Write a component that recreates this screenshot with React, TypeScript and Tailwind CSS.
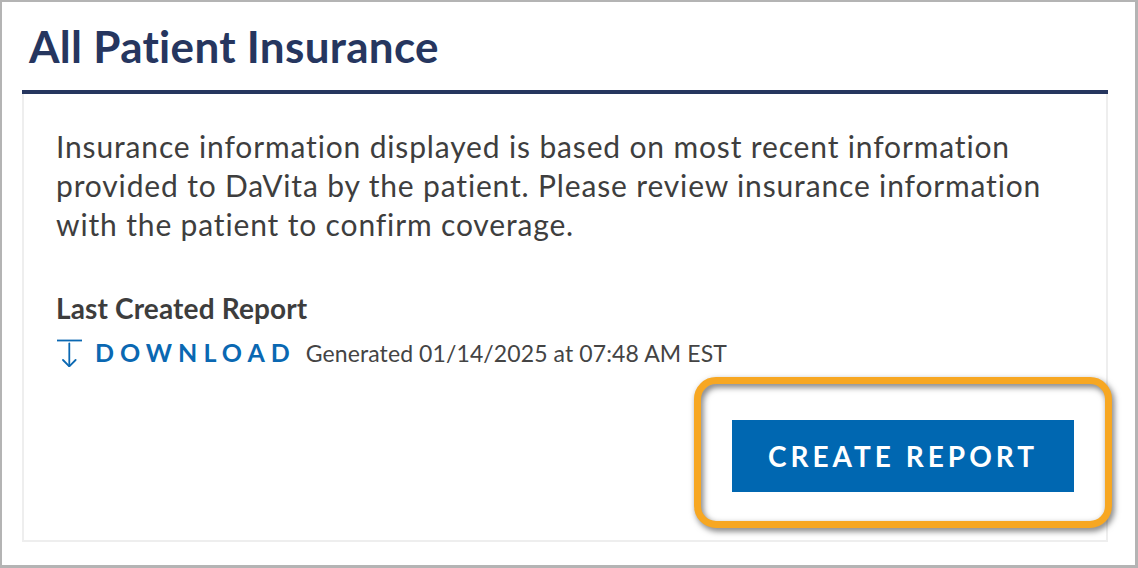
import React from "react";

function DownloadIcon() {
  return (
    <svg width="26" height="28" viewBox="0 0 26 28" fill="none" stroke="#0a68b2" strokeWidth="1.8" strokeLinecap="round" strokeLinejoin="round">
      <line x1="1" y1="1.5" x2="26" y2="1.5" strokeLinecap="butt" />
      <line x1="13.3" y1="4.5" x2="13.3" y2="27" />
      <polyline points="7,21 13.3,27.3 19.6,21" />
    </svg>
  );
}

export default function App() {
  return (
    <div className="w-[1138px] h-[568px] bg-white border-t-2 border-l-2 border-r-[3px] border-b-[3px] border-[#b4b4b4] font-['Lato','Liberation_Sans',sans-serif] overflow-hidden">
      <div className="pl-[20px] pr-[27px] pt-[19px]">
        <h1 className="text-[44px] font-bold leading-[50px] tracking-[0.3px] pl-[7px] text-[#26365f] mb-[19px]">
          All Patient Insurance
        </h1>
        <div className="h-[4px] bg-[#26365f]" />
        <div className="border-2 border-t-0 border-[#eeeeee] px-[32px] pt-[33px] pb-[48px]">
          <p className="text-[30px] leading-[39px] tracking-[0.85px] text-[#3e3e3e]">
            Insurance information displayed is based on most recent information provided to DaVita by the patient. Please review insurance information with the patient to confirm coverage.
          </p>
          <div className="mt-[47px] text-[28px] leading-[34px] font-bold tracking-[0.15px] text-[#3d3d3d]">
            Last Created Report
          </div>
          <div className="mt-[12px] flex items-center">
            <DownloadIcon />
            <div className="flex items-baseline ml-[13px]">
              <span className="text-[25px] leading-[30px] font-bold tracking-[6px] text-[#0a68b2]">
                DOWNLOAD
              </span>
              <span className="ml-[10px] text-[23px] leading-[30px] tracking-[0.1px] text-[#444444]">
                Generated 01/14/2025 at 07:48 AM EST
              </span>
            </div>
          </div>
          <div className="mt-[52px] flex justify-end">
            <div className="relative">
              <button className="w-[342px] h-[72px] bg-[#0067b1] text-white text-[28px] font-bold tracking-[4px] flex items-center justify-center">
                CREATE REPORT
              </button>
              <div className="pointer-events-none absolute left-[-38px] right-[-38px] top-[-43px] bottom-[-36px] border-[7px] border-[#f7a722] rounded-[22px] [filter:drop-shadow(2px_3px_3px_rgba(0,0,0,0.55))]" />
            </div>
          </div>
        </div>
      </div>
    </div>
  );
}
